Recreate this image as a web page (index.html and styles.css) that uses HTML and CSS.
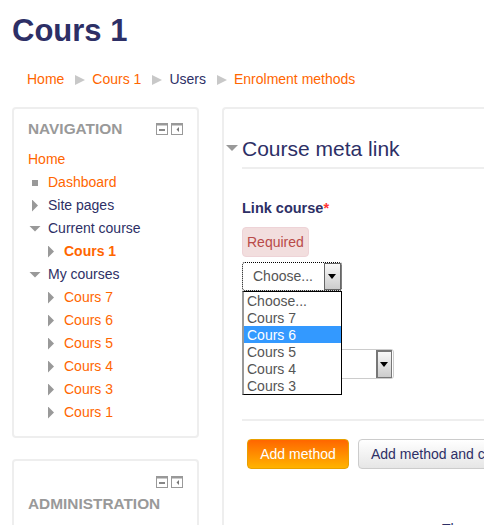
FILE: index.html
```html
<!DOCTYPE html>
<html lang="en">
<head>
    <meta charset="UTF-8">
    <title>Cours 1: Enrolment methods</title>
    <link rel="stylesheet" href="styles.css">
</head>
<body>
    <h1 class="page-title">Cours 1</h1>
    <div class="breadcrumb">
        <a>Home</a><span class="sep"></span>
        <a>Cours 1</a><span class="sep"></span>
        <span>Users</span><span class="sep"></span>
        <a>Enrolment methods</a>
    </div>

    <div class="columns">
        <div class="sidebar">
            <div class="block block-nav">
                <div class="block-head">
                    <span class="block-title">NAVIGATION</span>
                    <span class="block-icons">
                        <svg width="12" height="12" viewBox="0 0 12 12"><rect x=".5" y=".5" width="11" height="11" fill="#fff" stroke="#999"/><rect x="1" y="1" width="10" height="1.5" fill="#999"/><rect x="3" y="6" width="6" height="2" fill="#888"/></svg>
                        <svg width="12" height="12" viewBox="0 0 12 12"><rect x=".5" y=".5" width="11" height="11" fill="#fff" stroke="#999"/><rect x="1" y="1" width="10" height="1.5" fill="#999"/><path d="M8 4v5L5.500 6.500z" fill="#777"/></svg>
                    </span>
                </div>
                <ul class="tree">
                    <li class="tree-home"><a>Home</a></li>
                    <li class="lvl1"><i class="bullet"></i><a>Dashboard</a></li>
                    <li class="lvl1"><i class="arrow-right"></i><span>Site pages</span></li>
                    <li class="lvl1"><i class="arrow-down"></i><span>Current course</span></li>
                    <li class="lvl2"><i class="arrow-right"></i><a class="current">Cours 1</a></li>
                    <li class="lvl1"><i class="arrow-down"></i><span>My courses</span></li>
                    <li class="lvl2"><i class="arrow-right"></i><a>Cours 7</a></li>
                    <li class="lvl2"><i class="arrow-right"></i><a>Cours 6</a></li>
                    <li class="lvl2"><i class="arrow-right"></i><a>Cours 5</a></li>
                    <li class="lvl2"><i class="arrow-right"></i><a>Cours 4</a></li>
                    <li class="lvl2"><i class="arrow-right"></i><a>Cours 3</a></li>
                    <li class="lvl2"><i class="arrow-right"></i><a>Cours 1</a></li>
                </ul>
            </div>
            <div class="block block-admin">
                <div class="block-icons block-icons-top">
                    <svg width="12" height="12" viewBox="0 0 12 12"><rect x=".5" y=".5" width="11" height="11" fill="#fff" stroke="#999"/><rect x="1" y="1" width="10" height="1.5" fill="#999"/><rect x="3" y="6" width="6" height="2" fill="#888"/></svg>
                    <svg width="12" height="12" viewBox="0 0 12 12"><rect x=".5" y=".5" width="11" height="11" fill="#fff" stroke="#999"/><rect x="1" y="1" width="10" height="1.5" fill="#999"/><path d="M8 4v5L5.500 6.500z" fill="#777"/></svg>
                </div>
                <span class="block-title">ADMINISTRATION</span>
            </div>
        </div>

        <div class="main">
            <div class="section-head">
                <i class="section-arrow"></i>
                <h2>Course meta link</h2>
            </div>
            <div class="form">
                <div class="field-label">Link course<span class="req">*</span></div>
                <div class="error-tag">Required</div>
                <div class="select-wrap">
                    <div class="select select-focus">
                        <span class="select-text">Choose...</span>
                        <span class="select-btn"></span>
                    </div>
                    <ul class="dropdown">
                        <li>Choose...</li>
                        <li>Cours 7</li>
                        <li class="active">Cours 6</li>
                        <li>Cours 5</li>
                        <li>Cours 4</li>
                        <li>Cours 3</li>
                    </ul>
                </div>
                <div class="select select-second">
                    <span class="select-text"></span>
                    <span class="select-btn"></span>
                </div>
                <hr class="rule">
                <div class="buttons">
                    <button class="btn btn-primary">Add method</button>
                    <button class="btn">Add method and create another</button>
                </div>
                <p class="note">There are required fields</p>
            </div>
        </div>
    </div>
</body>
</html>
```

FILE: styles.css
```css
html, body {
    height: 525px;
    overflow: hidden;
}
body {
    margin: 0;
    font-family: "Liberation Sans", Arial, sans-serif;
    font-size: 14px;
    line-height: 23px;
    color: #2d2f66;
    background: #fff;
}
a {
    color: #f60;
}
ul {
    list-style: none;
    margin: 0;
    padding: 0;
}
.page-title {
    margin: 0;
    padding: 12px 0 0 12px;
    font-size: 31px;
    line-height: 38px;
    font-weight: bold;
}
.breadcrumb {
    display: flex;
    align-items: center;
    margin-top: 18px;
    padding-left: 27px;
}
.sep {
    width: 0;
    height: 0;
    margin: 0 7px 0 11px;
    border-left: 10px solid #c8c8c8;
    border-top: 5px solid transparent;
    border-bottom: 5px solid transparent;
}
.columns {
    display: flex;
    gap: 23px;
    margin-top: 16px;
    padding-left: 12px;
}
.sidebar {
    flex: 0 0 187px;
}
.block {
    box-sizing: border-box;
    border: 2px solid #eee;
    border-radius: 4px;
    padding: 0 14px;
}
.block-nav {
    height: 331px;
    padding-top: 8px;
}
.block-head {
    display: flex;
    justify-content: space-between;
    align-items: center;
    height: 23px;
    margin-bottom: 8px;
}
.block-title {
    font-size: 15.400px;
    font-weight: bold;
    color: #999;
}
.block-icons {
    display: flex;
    gap: 3px;
    line-height: 0;
}
.tree li {
    display: flex;
    align-items: center;
    height: 23px;
    white-space: nowrap;
}
.tree .lvl1 {
    padding-left: 4px;
}
.tree .lvl2 {
    padding-left: 20px;
}
.tree i {
    flex: 0 0 16px;
    box-sizing: border-box;
}
.current {
    font-weight: bold;
}
.bullet {
    height: 6px;
    border-right: 10px solid #fff;
    background: #999;
}
.arrow-right {
    height: 12px;
    background: #999;
    clip-path: polygon(0 0, 6px 6px, 0 12px);
}
.tree .arrow-down {
    flex-basis: 19px;
    margin-left: -3px;
    height: 6px;
    background: #999;
    clip-path: polygon(0 0, 12px 0, 6px 6px);
}
.block-admin {
    height: 120px;
    margin-top: 21px;
    padding-top: 15px;
}
.block-icons-top {
    justify-content: flex-end;
    margin-bottom: 4px;
}
.main {
    box-sizing: border-box;
    flex: 0 0 600px;
    height: 480px;
    border: 2px solid #eee;
    border-right: 0;
    border-bottom: 0;
    border-radius: 4px 0 0 0;
}
.section-head {
    position: relative;
    margin-left: 18px;
    padding: 22px 0 1px;
    border-bottom: 2px solid #eee;
}
.section-head h2 {
    margin: 0;
    font-size: 21px;
    line-height: 35px;
    font-weight: normal;
}
.section-arrow {
    position: absolute;
    left: -16px;
    top: 36px;
    width: 12px;
    height: 6px;
    background: #999;
    clip-path: polygon(0 0, 12px 0, 6px 6px);
}
.form {
    padding: 28px 0 0 18px;
}
.field-label {
    font-size: 14.500px;
    font-weight: bold;
}
.req {
    color: #f33;
}
.error-tag {
    display: inline-block;
    margin-top: 7px;
    padding: 0 4px;
    height: 30px;
    line-height: 28px;
    background: #f2dede;
    border: 1px solid #eed3d7;
    border-radius: 4px;
    color: #b94a48;
    box-sizing: border-box;
    vertical-align: top;
}
.select-wrap {
    position: relative;
    height: 29px;
    margin-top: 5px;
    width: 100px;
}
.select {
    box-sizing: border-box;
    display: flex;
    height: 29px;
    width: 100px;
    background: #fff;
    border-radius: 3px;
}
.select-focus {
    border: 1px dotted #000;
}
.select-text {
    flex: 1;
    padding-left: 10px;
    line-height: 27px;
    color: #555;
}
.select-btn {
    position: relative;
    box-sizing: border-box;
    flex: 0 0 17px;
    border: 1px solid #666;
    background: linear-gradient(#f8f8f8, #ccc);
}
.select-btn::after {
    content: "";
    position: absolute;
    left: 3px;
    top: 10px;
    border-top: 5px solid #000;
    border-left: 4px solid transparent;
    border-right: 4px solid transparent;
}
.dropdown {
    position: absolute;
    left: 0;
    top: 29px;
    z-index: 2;
    box-sizing: border-box;
    width: 100px;
    height: 104px;
    background: #fff;
    border: 1px solid #000;
    border-left: 2px solid #999;
    color: #555;
    line-height: 19px;
}
.dropdown li {
    height: 17px;
    padding-left: 3px;
}
.dropdown .active {
    background: #3399ff;
    color: #fff;
}
.select-second {
    width: 152px;
    height: 30px;
    margin-top: 58px;
    border: 1px solid #ccc;
}
.select-second .select-btn {
    flex: 0 0 16px;
    margin-right: 1px;
    border: 2px solid #777;
    border-right-width: 1px;
    border-bottom-width: 1px;
}
.select-second .select-btn::after {
    left: 2px;
    top: 10px;
}
.rule {
    height: 0;
    margin: 40px 0 0;
    border: 0;
    border-top: 2px solid #eee;
}
.buttons {
    display: flex;
    gap: 9px;
    margin-top: 18px;
    padding-left: 5px;
}
.btn {
    flex: none;
    box-sizing: border-box;
    height: 30px;
    padding: 0 12px;
    font: 14px "Liberation Sans", Arial, sans-serif;
    color: #2d2f66;
    background: linear-gradient(#fff, #e6e6e6);
    border: 1px solid #ccc;
    border-radius: 4px;
}
.btn-primary {
    width: 102px;
    color: #fff;
    background: linear-gradient(#ff6600, #ffb300);
    border-color: #e8a000;
}
.note {
    margin: 49px 0 0 200px;
    white-space: nowrap;
}
```
